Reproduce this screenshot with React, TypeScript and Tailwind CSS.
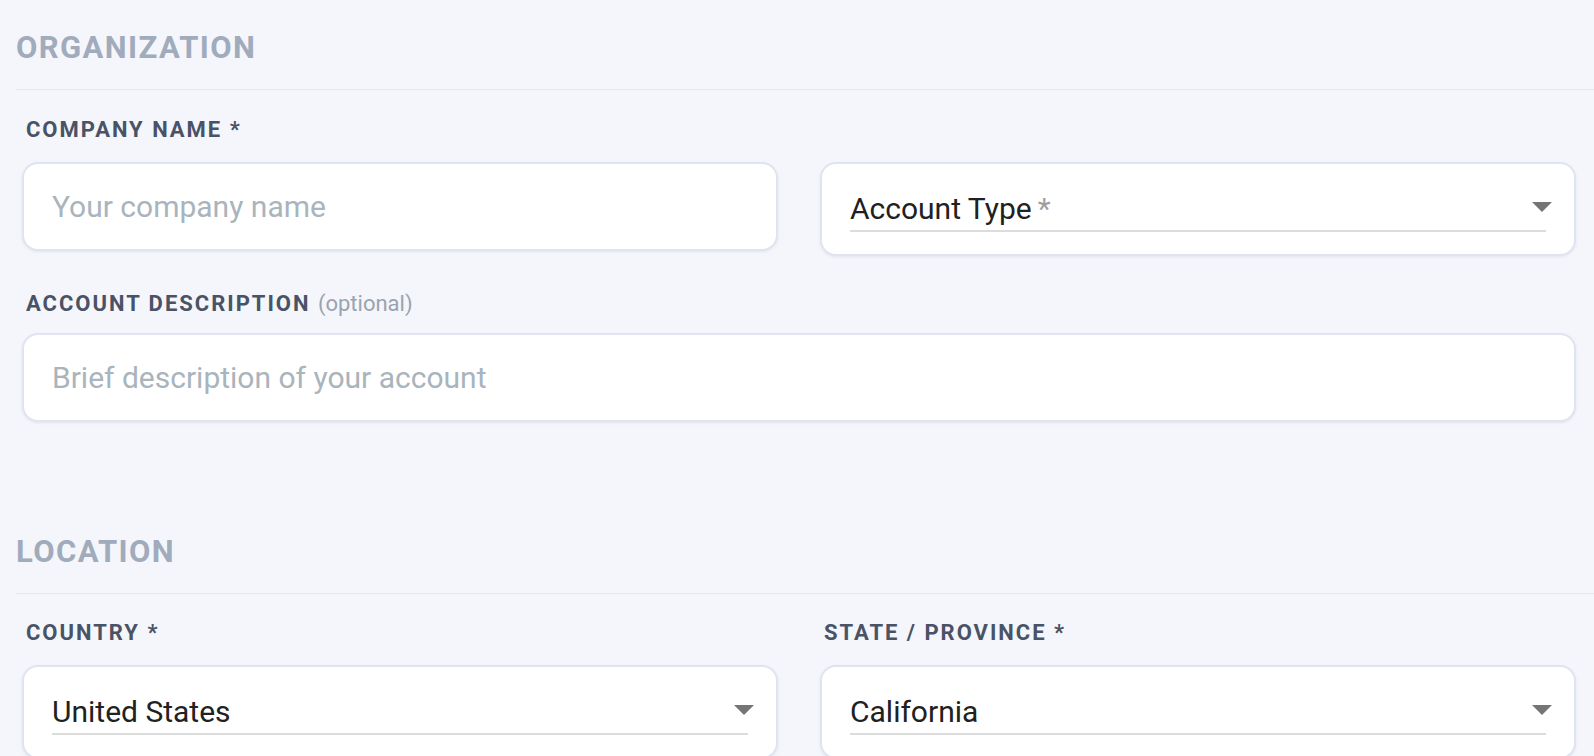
import React from "react";

function SectionHeading({ children }: { children: React.ReactNode }) {
  return (
    <div className="pt-[30px] pb-[23px] border-b border-[#e2e6ee]">
      <h2 className="text-[31px] leading-[36px] font-bold tracking-[0.045em] text-[#a0abbb]">
        {children}
      </h2>
    </div>
  );
}

function Label({ children }: { children: React.ReactNode }) {
  return (
    <div className="pl-[4px] mb-[19px] text-[22px] leading-[26px] font-bold tracking-[0.09em] text-[#4a5366]">
      {children}
    </div>
  );
}

function TextInput({ placeholder }: { placeholder: string }) {
  return (
    <input
      type="text"
      placeholder={placeholder}
      className="w-full h-[89px] rounded-[16px] border-2 border-[#dfe4f0] bg-white px-[28px] text-[30px] text-[#212121] placeholder:text-[#a9b4bc] shadow-[0_1px_3px_rgba(30,41,80,0.08)] outline-none"
    />
  );
}

function SelectBox({ value, required }: { value: string; required?: boolean }) {
  return (
    <div className="relative rounded-[16px] border-2 border-[#dfe4f0] bg-white pt-[23px] pb-[22px] shadow-[0_1px_3px_rgba(30,41,80,0.08)]">
      <div className="mx-[28px] border-b-2 border-[#dcdcdc] text-[30px] leading-[43px] text-[#212121]">
        {value}
        {required && <span className="text-[#9e9e9e]">{"\u2009*"}</span>}
      </div>
      {/* dropdown arrow */}
      <svg
        className="absolute right-[22px] top-[38px]"
        width="20"
        height="10"
        viewBox="0 0 20 10"
      >
        <path d="M0 0 L20 0 L10 10 Z" fill="#757575" />
      </svg>
    </div>
  );
}

export default function App() {
  return (
    <div className="min-h-screen bg-[#f4f6fb] pl-[16px] pb-[40px] font-['Roboto','Liberation_Sans',sans-serif]">
      {/* Organization */}
      <section>
        <SectionHeading>ORGANIZATION</SectionHeading>
        <div className="pl-[6px] pr-[18px] pt-[27px]">
          <div className="grid grid-cols-2 gap-x-[42px] items-start">
            <div>
              <Label>COMPANY NAME *</Label>
              <TextInput placeholder="Your company name" />
            </div>
            <div className="mt-[45px]">
              <SelectBox value="Account Type" required />
            </div>
          </div>
          <div className="mt-[35px]">
            <div className="pl-[4px] mb-[16px] text-[22px] leading-[26px] font-bold tracking-[0.09em] text-[#4a5366]">
              ACCOUNT DESCRIPTION{" "}
              <span className="text-[22px] font-normal tracking-normal text-[#9aa3af]">
                (optional)
              </span>
            </div>
            <TextInput placeholder="Brief description of your account" />
          </div>
        </div>
      </section>

      {/* Location */}
      <section className="mt-[82px]">
        <SectionHeading>LOCATION</SectionHeading>
        <div className="pl-[6px] pr-[18px] pt-[26px]">
          <div className="grid grid-cols-2 gap-x-[42px] items-start">
            <div>
              <Label>COUNTRY *</Label>
              <SelectBox value="United States" />
            </div>
            <div>
              <Label>STATE / PROVINCE *</Label>
              <SelectBox value="California" />
            </div>
          </div>
        </div>
      </section>
    </div>
  );
}
